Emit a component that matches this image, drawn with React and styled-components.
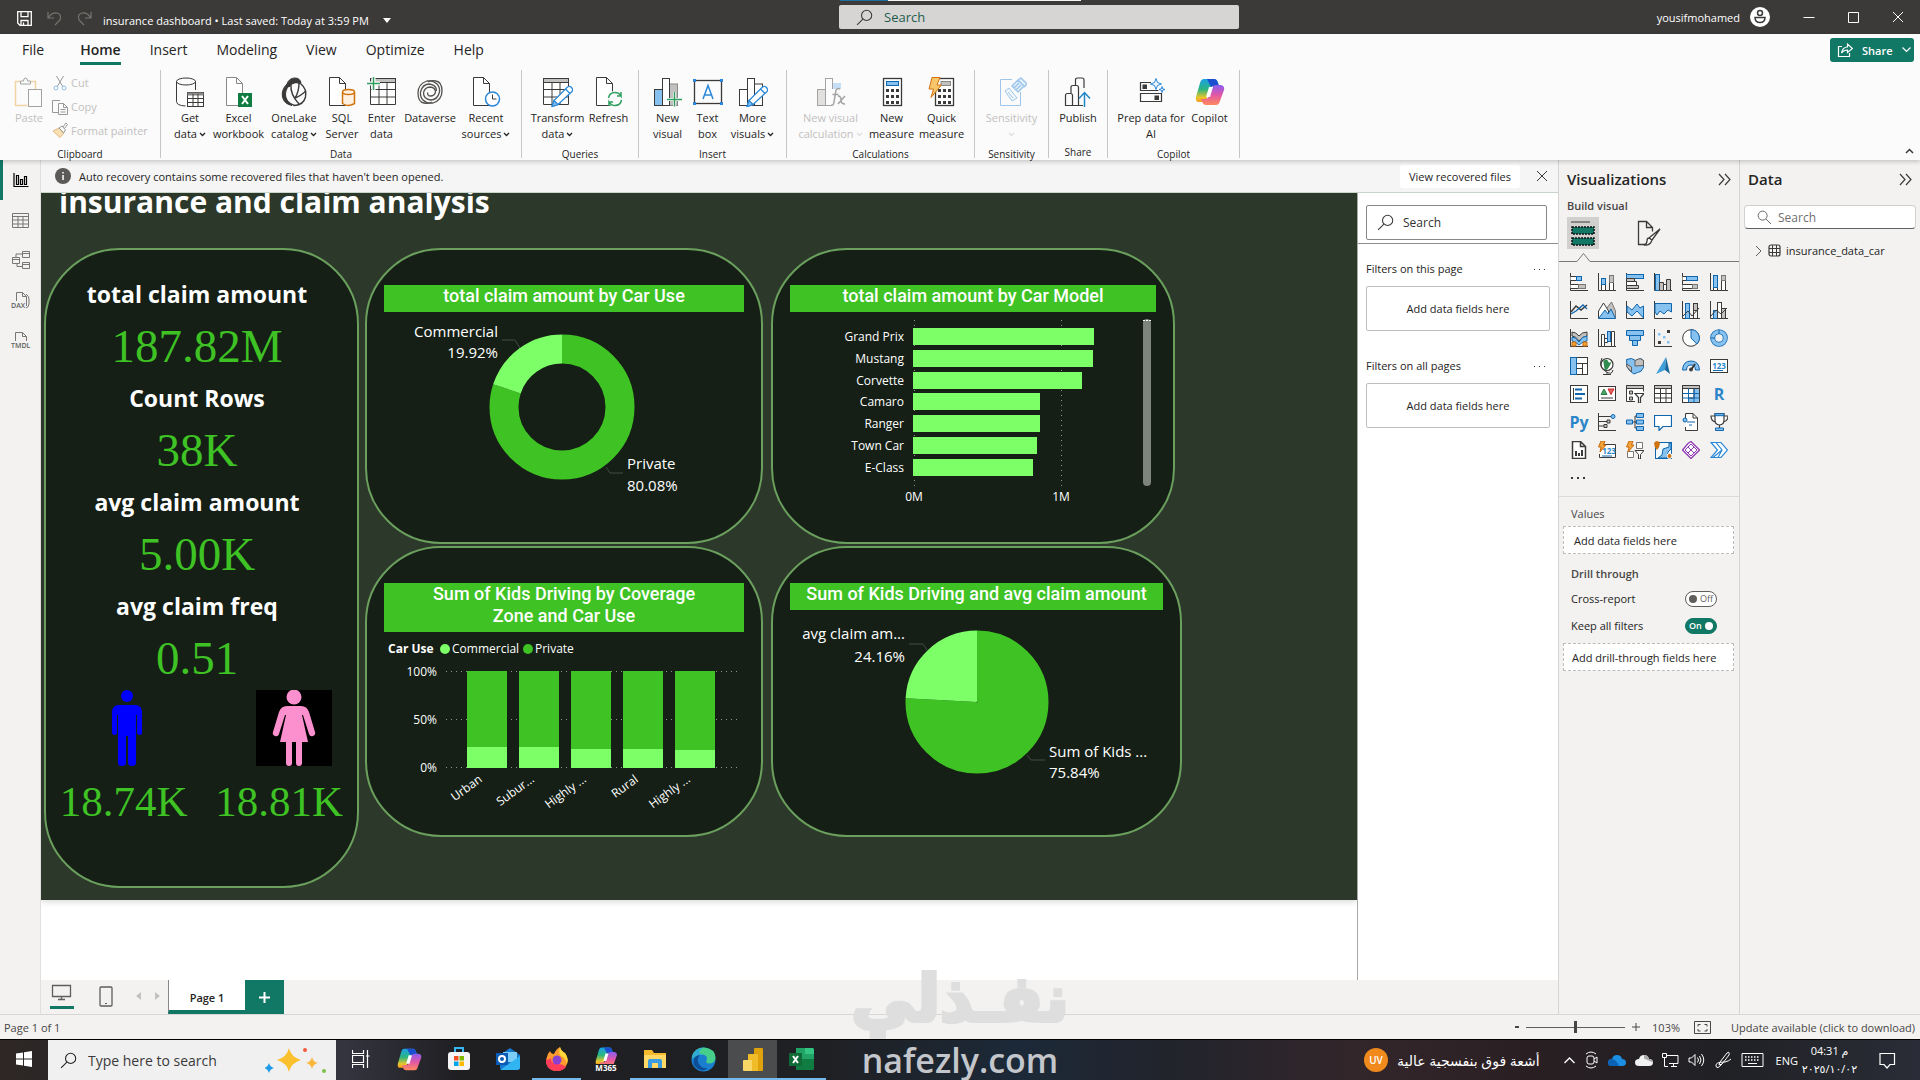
import React from 'react';
import styled, { createGlobalStyle } from 'styled-components';

// Colours shared by the icons
const K = '#3b3a39';
const B = '#86c1f0';
const S = '#1066ad';
const G = '#c3c1bf';
const GREEN = '#3ec224';
const LIGHT = '#7dff68';
const TEAL = '#117865';

const GlobalStyle = createGlobalStyle`
  * { box-sizing: border-box; }
  body {
    margin: 0;
    font-family: "Open Sans", "Noto Sans", "DejaVu Sans", sans-serif;
    font-size: 12px;
    color: #252423;
    overflow: hidden;
  }
  button, input {
    font: inherit;
    color: inherit;
  }
  button {
    background: none;
    border: 0;
    padding: 0;
    margin: 0;
  }
  svg { display: block; flex: none; }
`;

const Shell = styled.div`
  height: 100vh;
  display: flex;
  flex-direction: column;
  background: #f3f2f1;
`;

/* ---------- title bar ---------- */

const TitleBar = styled.header`
  height: 34px;
  flex: none;
  display: grid;
  grid-template-columns: 839fr 400fr 681fr;
  align-items: center;
  background: #3b3a39;
  color: #fff;
`;

const TitleLeft = styled.div`
  display: flex;
  align-items: center;
  gap: 15px;
  padding: 2px 0 0 17px;
`;

const FileName = styled.button`
  display: flex;
  align-items: center;
  gap: 14px;
  padding: 4px 0 0;
  margin-left: -4px;
  font-size: 11px;
  white-space: nowrap;
`;

const TitleSearch = styled.label`
  height: 24px;
  display: flex;
  align-items: center;
  gap: 11px;
  padding-left: 17px;
  border-radius: 2px;
  background: #d6d5d4;
  color: #1f5c4d;
`;

const SearchInput = styled.input.attrs({ type: 'text' })`
  flex: 1;
  min-width: 0;
  border: 0;
  outline: 0;
  padding: 0;
  background: none;
  font-size: ${(p) => p.$size || 12}px;
  &::placeholder {
    color: ${(p) => p.$tone};
    opacity: 1;
  }
`;

const TopStrip = styled.div`
  position: absolute;
  top: 0;
  left: 840px;
  width: 241px;
  height: 1px;
  background: linear-gradient(90deg, #1d6f9f 48px, #f3f3f3 48px);
`;

const TitleRight = styled.div`
  display: flex;
  justify-content: flex-end;
  align-items: center;
  padding-right: 16px;
  gap: 33px;
`;

const Account = styled.button`
  display: flex;
  align-items: center;
  gap: 10px;
  font-size: 11px;
  color: #fff;
`;

/* ---------- ribbon ---------- */

const Ribbon = styled.section`
  flex: none;
  height: 126px;
  background: #fbfbfb;
  box-shadow: 0 2px 4px rgba(0, 0, 0, 0.18);
  position: relative;
  z-index: 1;
`;

const TabRow = styled.nav`
  height: 36px;
  display: flex;
  align-items: flex-start;
  gap: 29px;
  padding: 0 6px 0 22px;
`;

const RibbonTab = styled.button`
  padding: 6px 0 2px;
  line-height: 20px;
  font-size: 14px;
  font-weight: ${(p) => (p.$active ? 600 : 400)};
  border-bottom: 3px solid ${(p) => (p.$active ? TEAL : 'transparent')};
  &:first-child { margin-right: 7px; }
`;

const ShareButton = styled.button`
  display: flex;
  align-items: center;
  gap: 9px;
  height: 24px;
  width: 84px;
  padding-left: 7px;
  margin: 4px 0 0 auto;
  border-radius: 3px;
  background: ${TEAL};
  color: #fff;
  font-size: 11px;
  font-weight: 600;
`;

const CollapseRibbon = styled.button`
  position: absolute;
  right: 6px;
  bottom: 6px;
`;

const Groups = styled.div`
  display: flex;
`;

const Group = styled.div`
  width: ${(p) => p.$width}px;
  height: 88px;
  display: flex;
  flex-direction: column;
  border-right: 1px solid #c8c6c4;
`;

const GroupBody = styled.div`
  display: flex;
  justify-content: ${(p) => (p.$start ? 'flex-start' : 'center')};
  height: 72px;
  padding-top: 7px;
  padding-left: ${(p) => (p.$start ? 6 : 0)}px;
`;

const GroupLabel = styled.div`
  margin-top: 6px;
  line-height: 12px;
  font-size: 10px;
  text-align: center;
`;

const BigButton = styled.button`
  width: ${(p) => p.$width}px;
  display: flex;
  flex-direction: column;
  align-items: center;
  gap: 3px;
  line-height: 16px;
  font-size: 11px;
  white-space: nowrap;
  color: ${(p) => (p.disabled ? '#c2c0be' : '#252423')};
  svg { opacity: ${(p) => (p.disabled ? 0.45 : 1)}; }
`;

const ButtonText = styled.span`
  display: flex;
  flex-direction: column;
  align-items: center;
`;

const TextLine = styled.span`
  display: flex;
  align-items: center;
  gap: 2px;
  min-height: 16px;
`;

const SmallButtons = styled.div`
  display: flex;
  flex-direction: column;
`;

const SmallButton = styled.button`
  display: flex;
  align-items: center;
  gap: 3px;
  height: 24px;
  margin-top: ${(p) => (p.$first ? -6 : 0)}px;
  color: #c2c0be;
  font-size: 11px;
  white-space: nowrap;
  svg { opacity: 0.5; }
`;

/* ---------- workspace ---------- */

const Workspace = styled.div`
  flex: 1;
  min-height: 0;
  display: flex;
  border-bottom: 1px solid #d9d7d5;
`;

const Rail = styled.nav`
  width: 41px;
  flex: none;
  display: flex;
  flex-direction: column;
  border-right: 1px solid #e1dfdd;
`;

const RailButton = styled.button`
  height: 40px;
  display: flex;
  align-items: center;
  justify-content: center;
  padding-right: 2px;
  border-left: 3px solid ${(p) => (p.$active ? TEAL : 'transparent')};
`;

const Center = styled.main`
  flex: 1;
  min-width: 0;
  display: flex;
  flex-direction: column;
`;

const Notice = styled.div`
  height: 33px;
  flex: none;
  display: flex;
  align-items: center;
  padding: 0 10px 0 14px;
  gap: 8px;
  background: #f5f5f5;
  border-bottom: 1px solid #c9d5cb;
  font-size: 11px;
`;

const NoticeAction = styled.button`
  margin-left: auto;
  margin-right: 8px;
  width: 120px;
  height: 23px;
  border-radius: 3px;
  background: #fff;
`;

const Middle = styled.div`
  flex: 1;
  min-height: 0;
  display: flex;
  background: #fff;
`;

const Canvas = styled.div`
  flex: 1;
  min-width: 0;
  overflow: hidden;
  background: #fff;
`;

const Report = styled.div`
  display: flow-root;
  padding: 0 0 12px 3px;
  background: #2c3829;
  color: #fff;
  box-shadow: 0 2px 6px rgba(0, 0, 0, 0.15);
`;

const ReportTitle = styled.h1`
  margin: -11px 0 26px 15px;
  line-height: 40px;
  font-size: 30px;
  font-weight: 700;
  white-space: nowrap;
`;

const ReportGrid = styled.div`
  display: grid;
  grid-template-columns: 321fr 406fr 411fr 175fr;
  align-items: start;
`;

const Column = styled.div`
  display: flex;
  flex-direction: column;
  gap: 2px;
  margin-right: ${(p) => p.$right || 0}px;
`;

const Card = styled.section`
  height: ${(p) => p.$height}px;
  margin-right: ${(p) => p.$right || 0}px;
  padding: 35px 17px 0;
  border: 2px solid #6a9f5d;
  border-radius: 76px;
  background: #151f16;
  overflow: hidden;
`;

const CardTitle = styled.h2`
  margin: 0;
  padding: 0 ${(p) => (p.$tight ? 0 : 30)}px 5px;
  background: ${GREEN};
  font-family: Roboto, "Liberation Sans", sans-serif;
  font-size: 18px;
  font-weight: 500;
  line-height: 22px;
  text-align: center;
`;

const KpiCard = styled.section`
  margin-right: 6px;
  padding: 24px 0 52px;
  border: 2px solid #6a9f5d;
  border-radius: 76px;
  background: #151f16;
  text-align: center;
`;

const KpiList = styled.div`
  padding-right: 9px;
`;

const KpiLabel = styled.div`
  line-height: 40px;
  font-size: 23px;
  font-weight: 700;
`;

const KpiValue = styled.div`
  line-height: 64px;
  font-family: "Liberation Serif", serif;
  font-size: ${(p) => p.$size || 47}px;
  color: ${GREEN};
`;

const Halves = styled.div`
  display: grid;
  grid-template-columns: 1fr 1fr;
  row-gap: 4px;
  justify-items: center;
`;

const Figure = styled.div`
  width: 76px;
  height: 76px;
  display: flex;
  justify-content: center;
  background: ${(p) => (p.$dark ? '#000' : 'none')};
  margin-left: ${(p) => (p.$dark ? 30 : 6)}px;
`;

const ChartText = styled.text`
  fill: #fff;
  font-size: ${(p) => p.$size || 15}px;
  font-weight: ${(p) => (p.$bold ? 700 : 400)};
`;

/* ---------- filter, visual and data panes ---------- */

const Filters = styled.aside`
  width: 201px;
  flex: none;
  border-left: 1px solid #a9a7a5;
  background: #fff;
`;

const FilterSearch = styled.div`
  padding: 12px 11px 3px 8px;
  border-bottom: 1px solid #8f8d8b;
`;

const FilterBox = styled.label`
  height: 35px;
  display: flex;
  align-items: center;
  gap: 9px;
  padding-left: 10px;
  border: 1px solid #8a8886;
  border-radius: 2px;
`;

const FilterHead = styled.div`
  display: flex;
  justify-content: space-between;
  padding: 17px 11px 0 8px;
  line-height: 16px;
  font-size: 11px;
  margin-bottom: 9px;
`;

const FilterDrop = styled.button`
  display: block;
  width: 184px;
  height: 45px;
  margin: 0 8px 10px;
  border: 1px solid #c0bebc;
  border-radius: 2px;
  font-size: 11px;
`;

const Pane = styled.aside`
  width: 181px;
  flex: none;
  border-left: 1px solid #d6d4d2;
  background: #f3f2f1;
`;

const PaneHead = styled.div`
  display: flex;
  align-items: center;
  justify-content: space-between;
  height: 38px;
  padding: 0 8px;
`;

const PaneTitle = styled.h2`
  margin: 0;
  font-size: 15px;
  font-weight: 600;
`;

const SubTitle = styled.div`
  padding-left: 8px;
  line-height: 16px;
  font-size: 11px;
  font-weight: 600;
  color: #484644;
`;

const ModeRow = styled.div`
  display: flex;
  gap: 34px;
  padding: 3px 8px 0;
`;

const ModeButton = styled.button`
  width: 32px;
  height: 32px;
  display: flex;
  align-items: center;
  justify-content: center;
  background: ${(p) => (p.$active ? '#d2d0ce' : 'none')};
`;

const VisualGrid = styled.div`
  display: grid;
  grid-template-columns: repeat(6, 28px);
  grid-auto-rows: 28px;
  padding: 5px 0 0 6px;
`;

const VisualButton = styled.button`
  display: flex;
  align-items: center;
  justify-content: center;
  font-size: 16px;
  font-weight: 700;
  color: #2a86c8;
`;

const MoreVisuals = styled.button`
  display: block;
  margin: 11px 0 17px 11px;
`;

const Fields = styled.div`
  border-top: 1px solid #dddbd9;
  padding: 9px 5px 0 4px;
  font-size: 11px;
`;

const FieldLabel = styled.div`
  line-height: 16px;
  padding-left: 8px;
  color: #484644;
  font-weight: ${(p) => (p.$strong ? 600 : 400)};
  margin-bottom: ${(p) => (p.$strong ? 3 : 0)}px;
`;

const FieldWell = styled.button`
  display: block;
  width: 100%;
  height: 28px;
  margin: 4px 0 12px;
  padding-left: ${(p) => (p.$snug ? 8 : 10)}px;
  border: 1px dashed #bdbbb9;
  background: #fff;
  text-align: left;
  white-space: nowrap;
`;

const ToggleRow = styled.label`
  display: flex;
  align-items: center;
  justify-content: space-between;
  height: 27px;
  padding: 0 17px 0 8px;
`;

const Toggle = styled.input.attrs({ type: 'checkbox' })`
  appearance: none;
  width: 32px;
  height: 16px;
  margin: 0;
  padding: 0 3px;
  display: inline-flex;
  flex-direction: row-reverse;
  align-items: center;
  justify-content: space-between;
  border: 1px solid #605e5c;
  border-radius: 8px;
  background: #fff;
  font-size: 9px;
  line-height: 14px;
  color: #605e5c;
  &::before { content: "Off"; }
  &::after {
    content: "";
    width: 8px;
    height: 8px;
    border-radius: 50%;
    background: #605e5c;
  }
  &:checked {
    flex-direction: row;
    background: ${TEAL};
    border-color: ${TEAL};
    color: #fff;
    font-weight: 600;
  }
  &:checked::before { content: "On"; }
  &:checked::after { background: #fff; }
`;

const DataSearch = styled.label`
  height: 24px;
  display: flex;
  align-items: center;
  gap: 6px;
  margin: 7px 4px 0;
  padding-left: 12px;
  border: 1px solid #d1d1d1;
  border-bottom-color: #616161;
  border-radius: 4px;
  background: #fff;
`;

const DataItem = styled.button`
  display: flex;
  align-items: center;
  gap: 5px;
  margin: 14px 0 0 15px;
  font-size: 11px;
`;

/* ---------- page tabs and status bar ---------- */

const PageTabs = styled.div`
  height: 34px;
  flex: none;
  display: flex;
  background: #f3f2f1;
`;

const ViewButton = styled.button`
  width: ${(p) => p.$width}px;
  display: flex;
  justify-content: center;
  align-items: center;
  padding-bottom: 2px;
`;

const PageTab = styled.button`
  width: 77px;
  border-left: 1px solid #8a8886;
  border-bottom: 4px solid ${TEAL};
  background: #fff;
  font-size: 11px;
  font-weight: 600;
  padding-top: 4px;
`;

const AddPage = styled.button`
  width: 39px;
  display: flex;
  align-items: center;
  justify-content: center;
  background: ${TEAL};
`;

const StatusBar = styled.footer`
  height: 24px;
  flex: none;
  display: flex;
  align-items: center;
  padding: 0 5px 0 4px;
  font-size: 11px;
  color: #484644;
`;

const Zoom = styled.div`
  margin-left: auto;
  display: flex;
  align-items: center;
  gap: 7px;
`;

const ZoomSlider = styled.input.attrs({ type: 'range' })`
  appearance: none;
  width: 99px;
  height: 12px;
  margin: 0;
  background: linear-gradient(#605e5c, #605e5c) center / 100% 1px no-repeat;
  &::-webkit-slider-thumb {
    appearance: none;
    width: 3px;
    height: 12px;
    background: #484644;
  }
`;

const ZoomValue = styled.span`
  margin: 0 7px 0 5px;
`;

const UpdateLink = styled.a`
  margin-left: 20px;
  color: inherit;
  text-decoration: none;
  white-space: nowrap;
`;

/* ---------- taskbar ---------- */

const Taskbar = styled.footer`
  height: 41px;
  flex: none;
  display: flex;
  border-top: 1px solid #000;
  background: linear-gradient(90deg, #2e2726 0, #2a2625 3%, #33343e 18%, #1f1f22 24%, #1f2023 43%,
    #1c2938 53%, #22242c 61%, #33262a 71%, #291f23 80%, #202125 90%, #2a2d37 100%);
  color: #fff;
`;

const TaskCell = styled.button`
  width: ${(p) => p.$width || 49}px;
  display: flex;
  align-items: center;
  justify-content: center;
  background: ${(p) => (p.$active ? '#4b4c4d' : 'none')};
  border-bottom: 2px solid ${(p) => (p.$open ? '#76b9ed' : 'transparent')};
`;

const TaskSearch = styled.label`
  width: 288px;
  display: flex;
  align-items: center;
  gap: 11px;
  padding: 0 9px 0 12px;
  background: #f0f0f0;
`;

const Tray = styled.div`
  margin-left: auto;
  display: flex;
  align-items: center;
  padding-right: 24px;
`;

const Weather = styled.button`
  display: flex;
  align-items: center;
  gap: 9px;
  margin-right: 23px;
  color: #fff;
  font-size: 14px;
  white-space: nowrap;
`;

const TrayIcons = styled.div`
  display: flex;
  align-items: center;
  gap: 9px;
  margin-right: 12px;
`;

const Clock = styled.div`
  width: 63px;
  margin-right: 18px;
  line-height: 18px;
  font-size: 11px;
  text-align: center;
  white-space: nowrap;
`;

const Language = styled.span`
  font-size: 11px;
`;

const Watermark = styled.div`
  position: absolute;
  bottom: 0;
  left: 50%;
  transform: translateX(-50%);
  display: flex;
  flex-direction: column;
  align-items: center;
  gap: 8px;
  font-weight: 700;
  pointer-events: none;
  z-index: 2;
`;

const WatermarkArabic = styled.span`
  font-family: "DejaVu Sans", sans-serif;
  font-size: 64px;
  line-height: 66px;
  color: #dddedd;
  -webkit-text-stroke: 4px #dddedd;
`;

const WatermarkLatin = styled.span`
  font-size: 34px;
  line-height: 40px;
  font-weight: 600;
  color: #c3c6ca;
`;

/* ---------- icons ---------- */

const Svg = ({ w = 18, h = w, vw = w, vh = w === h ? vw : h, children, stroke = K }) => (
  <svg width={w} height={h} viewBox={`0 0 ${vw} ${vh}`} fill="none" stroke={stroke} aria-hidden="true">
    {children}
  </svg>
);

const Chevron = () => (
  <Svg w={7} h={5} stroke="currentColor"><path d="M1 1l2.5 2.5L6 1" strokeWidth="1.3" /></Svg>
);

const Magnifier = ({ w = 17, stroke = K, flip }) => (
  <Svg w={w} vw={16} stroke={stroke}>
    <g transform={flip ? 'translate(16 0) scale(-1 1)' : undefined}>
      <circle cx="10" cy="6" r="4.8" /><path d="M6.5 9.5L1 15" />
    </g>
  </Svg>
);

const Cross = ({ w = 12, stroke = K }) => <Svg w={w} stroke={stroke}><path d="M1 1l10 10M11 1L1 11" /></Svg>;

const DoubleChevron = () => <Svg w={13}><path d="M1 1l5 5.5L1 12M7 1l5 5.5L7 12" strokeWidth="1.2" /></Svg>;

const Dots = ({ gap = 4, size = 1 }) => (
  <Svg w={gap * 2 + 4} h={4} stroke="none">
    {[0, 1, 2].map((i) => <rect key={i} x={1 + i * gap} y="2" width={size} height={size} fill={K} />)}
  </Svg>
);

const page = <path d="M2.5.5h10l6 6V28.5h-16zM12.5.5v6h6" fill="#fff" />;
const gridLines = 'M.5 5.5h25v22H.5zM.5 12.5h25M.5 20h25M9 5.5v22M17 5.5v22';
const bars = (first) => (
  <>
    <rect x="1.5" y="12.5" width="8" height="16" fill={first} />
    <rect x="15.5" y="7" width="9" height="21.5" fill={first === '#fff' ? '#fff' : G} stroke={first === '#fff' ? K : '#8a8886'} />
    <rect x="9.5" y="1.5" width="7" height="27" fill="#fff" />
  </>
);
const pencil = (
  <g stroke="#2b88d8" strokeWidth="1.3">
    <path d="M9 29.5l2-6L24.5 10q2-1.5 4 .5t.5 4L15 27.5z" fill="#fff" />
    <path d="M9 29.5l2-6 4 4z" fill={B} /><path d="M22.5 12l4.5 4.5" />
  </g>
);
const calculator = (
  <>
    <rect x="6.5" y="1.5" width="18" height="27" fill="#fff" strokeWidth="1.3" />
    {[12, 18, 24].map((y) => [9, 14, 19].map((x) => (
      <rect key={`${x}-${y}`} x={x} y={y} width="3" height="3" fill={K} stroke="none" />
    )))}
  </>
);
const bolt = <path d="M5 .5h8L10 8h4.5L4 20.5 6.5 12H2z" fill="#f7c66b" stroke="#d0730f" />;

const icons = {
  paste: (
    <>
      <path d="M6 4.5H1.5v24h12M17 4.5h4.5V12" stroke="#e8a33d" strokeWidth="1.5" />
      <path d="M6.5 7V4h3q0-3 2-3t2 3h3v3z" /><rect x="14.5" y="12.5" width="13" height="17" fill="#fff" />
    </>
  ),
  database: (
    <>
      <ellipse cx="11" cy="4.5" rx="9.5" ry="3.5" />
      <path d="M1.5 4.5v20q0 4 9 4.5M20.5 4.5V13" />
      <rect x="12.5" y="15.5" width="16" height="14" fill="#fff" /><path d="M12.5 17h16" strokeWidth="3" stroke="#8a8886" />
      <path d="M12.5 21.5h16M12.5 25.5h16M18 17v12.5M23 17v12.5" />
    </>
  ),
  excel: (
    <>
      <g stroke="#8a8886">{page}</g>
      <rect x="14" y="16" width="14" height="14" fill="#107c41" stroke="none" />
      <path d="M18 19l6 8M24 19l-6 8" stroke="#fff" strokeWidth="2" />
    </>
  ),
  onelake: (
    <>
      <path d="M8 7q2-6 8-6 5 0 6 5-8-2-12 4z" fill={K} />
      <path d="M8 7q-6 6-4.5 13T13 28.5Q6 24 6.5 17T12 8z" fill={K} />
      <path d="M9 8q7-5 13-1 6 5 4.5 13-2 8-11 8.5Q7 26 6 18" strokeWidth="1.4" />
      <path d="M12 8q-1 9 8 19M16 21q4-1 11-7M20 6q0 9-4 15" strokeWidth="1.4" />
    </>
  ),
  sql: (
    <>
      {page}
      <path d="M15.5 15v11.5q5.5 4 12 0V15" fill="#fdf1e1" stroke="#d0730f" strokeWidth="1.5" />
      <ellipse cx="21.5" cy="15" rx="6" ry="2.5" fill="#fdf1e1" stroke="#d0730f" strokeWidth="1.5" />
    </>
  ),
  enter: (
    <>
      <g transform="translate(3 0)"><path d={gridLines} fill="#fff" /><rect x=".5" y="1.5" width="25" height="4" fill={G} /></g>
      <path d="M6.5 0v13M0 6.5h13" stroke="#fbfbfb" strokeWidth="4" />
      <path d="M6.5 0v13M0 6.5h13" stroke="#2f9e5f" strokeWidth="1.5" />
    </>
  ),
  dataverse: (
    <g strokeWidth="1.3" stroke="#55534f">
      <path d="M22 7q-4-4-10-3Q3 7 3 16t6 10q5 1 8-1" />
      <path d="M8 23q4 4 10 3 9-3 9-12T21 4q-5-1-8 1" />
      <path d="M22 7q3 3 2.5 8-2 8-9 8-7-1-7-7 1-6 7-6 5 1 5 5-1 4-5 4-3 0-3-3.5" />
      <path d="M8 23q-3-3-2.5-8 2-8 9-8 7 1 7 7" />
    </g>
  ),
  recent: (
    <>
      {page}
      <circle cx="21.5" cy="22" r="7" fill="#fff" stroke="#2b88d8" strokeWidth="1.5" /><path d="M21.5 17.5V22h4" />
    </>
  ),
  transform: (
    <>
      <path d={gridLines} fill="#fff" /><rect x=".5" y="1.5" width="25" height="4" fill={G} />{pencil}
    </>
  ),
  refresh: (
    <>
      {page}
      <circle cx="21" cy="22" r="8" fill="#fbfbfb" stroke="none" />
      <path d="M14.5 21q1-5.5 6.5-5.5 4 0 6 3.5v-4M27.5 23q-1 5.5-6.5 5.5-4 0-6-3.5v4M27 19h-4M15 25h4" stroke="#2f9e5f" strokeWidth="1.5" />
    </>
  ),
  newVisual: (
    <>
      {bars(B)}<path d="M21.5 15v14.5M14 22.5h15" stroke="#fbfbfb" strokeWidth="3" />
      <path d="M21.5 15v14.5M14 22.5h15" stroke="#2f9e5f" strokeWidth="1.5" />
    </>
  ),
  textBox: (
    <>
      <rect x="1.5" y="3.5" width="27" height="23" strokeWidth="1.3" />
      <path d="M10 22l5-13.5L20 22M11.5 18h7" stroke="#2b88d8" strokeWidth="1.5" />
      {[[0, 2], [27, 2], [0, 25], [27, 25]].map(([x, y]) => (
        <rect key={`${x}${y}`} x={x} y={y} width="3" height="3" fill="#2b88d8" stroke="none" />
      ))}
    </>
  ),
  moreVisuals: <>{bars('#fff')}{pencil}</>,
  visualCalc: (
    <>
      {bars(G)}<rect x="17" y="6" width="8" height="6" fill={B} stroke="none" /><rect x="16" y="12" width="14" height="18" fill="#fbfbfb" stroke="none" />
      <path d="M24 12q-4-2-4.5 4l-1.5 9q-.5 4-3 3M16.5 17.5h6M22 19q3 0 3 4t4 4M29 19l-7 8" strokeWidth="1.5" />
    </>
  ),
  measure: <>{calculator}<rect x="9.5" y="4.5" width="12" height="4" fill={B} stroke={S} /></>,
  quick: (
    <>
      <g transform="translate(2 0)">{calculator}<rect x="12" y="4.5" width="9.5" height="4" fill={G} stroke="#8a8886" /></g>{bolt}
    </>
  ),
  sensitivity: (
    <g stroke="#2b88d8">
      <path d="M15 2.5H3.5v26h20V15" />
      <path d="M8 14l4-3 8 10-5 3zM11 15l5 6" fill="#e8f3fb" />
      <path d="M15 9l6-6 6 6-6 6zM21 3l3-2 6 6-3 3M17 11l5-5M19 13l5-5" fill="#cfe6f7" strokeWidth="1.5" />
    </g>
  ),
  publish: (
    <>
      <path d="M2.5 28.5v-10q0-2 2-2h3q2 0 2 2v10zM8 16v-5.5q0-2 2-2h3.5q2 0 2 2V28.5h-6M12.5 8V3q0-2 2-2H19q2 0 2 2v8M15.5 28.5H20" strokeWidth="1.2" />
      <path d="M21.5 30V16M16 21.5l5.5-6 5.5 6" stroke="#1f86c7" strokeWidth="1.5" />
    </>
  ),
  prep: (
    <>
      <path d="M15 5.5H4.5v8h18M4.5 16.5h21v8h-21z" strokeWidth="1.2" />
      <rect x="7" y="8" width="3.5" height="3.5" fill={K} /><rect x="19" y="19" width="3.5" height="3.5" fill={K} />
      <path d="M20 1.5l1.5 4 4 1.5-4 1.5-1.5 4-1.5-4-4-1.5 4-1.5zM26 9.5l.7 2.3 2.3.7-2.3.7-.7 2.3-.7-2.3-2.3-.7 2.3-.7z" fill="#e8f3fb" stroke="#2b88d8" />
    </>
  ),
};

const copilotShape = (
  <>
    <defs>
      <linearGradient id="cpA" x1="0" y1="0" x2="0" y2="1"><stop offset="0" stopColor="#1aa0e8" /><stop offset=".45" stopColor="#2cb67d" /><stop offset=".8" stopColor="#e9c52b" /><stop offset="1" stopColor="#f79a1f" /></linearGradient>
      <linearGradient id="cpB" x1="0" y1="0" x2="0" y2="1"><stop offset="0" stopColor="#8a5cf0" /><stop offset=".5" stopColor="#e257a6" /><stop offset="1" stopColor="#ff8a5b" /></linearGradient>
    </defs>
    <path d="M9 2h10q3 0 4 4l1 3h-5q-3 0-4 3l-3 9q-1 4-4 4H4q-4 0-3-5L5 6q1-4 4-4z" fill="url(#cpA)" />
    <path d="M12 2h7q3 0 4 4l1 3h-5q-2 0-3 1z" fill="#1b4fd0" />
    <path d="M21 28H11q-3 0-4-4l-1-2h4q3 0 4-3l3-8q1-3 4-3h5q4 1 3 5l-4 11q-1 4-4 4z" fill="url(#cpB)" />
    <path d="M14 10h4l-3 10h-4z" fill="#fff" />
  </>
);

const Copilot = ({ w = 30 }) => <Svg w={w} vw={30} stroke="none">{copilotShape}</Svg>;

const axis = <path d="M.5 0v17.5H18" />;
const visuals = [
  ['Stacked bar chart', <>{axis}<path d="M.5 3.5h6v4h-6M.5 11.5h8v4h-8" fill="#fff" /><rect x="6.5" y="3.5" width="5" height="4" fill={B} stroke={S} /><rect x="8.5" y="11.5" width="7" height="4" fill={G} stroke="#797775" /></>],
  ['Stacked column chart', <>{axis}<path d="M3.5 11.5h4v6h-4zM11.5 9.5h4v8h-4z" fill="#fff" /><rect x="3.5" y="5.5" width="4" height="6" fill={B} stroke={S} /><rect x="11.5" y="2.5" width="4" height="7" fill={G} stroke="#797775" /></>],
  ['Clustered bar chart', <>{axis}<rect x=".5" y="1.5" width="17" height="4" fill={B} stroke={S} /><path d="M.5 5.5h8v3h-8zM.5 12.5h12v3h-12z" fill={G} /><path d="M.5 8.5h10v4H.5z" fill="#fff" /></>],
  ['Clustered column chart', <>{axis}<rect x="1.5" y="1.5" width="4" height="16" fill={B} stroke={S} /><path d="M5.5 9.5h4v8h-4zM12.5 6.5h4v11h-4z" fill={G} /><path d="M9.5 11.5h3v6h-3z" fill="#fff" /></>],
  ['100% stacked bar chart', <>{axis}<path d="M.5 3.5h5v4h-5M.5 11.5h10v4H.5" fill="#fff" /><rect x="4.5" y="3.5" width="11" height="4" fill={B} stroke={S} /><rect x="10.5" y="11.5" width="5" height="4" fill={G} stroke="#797775" /></>],
  ['100% stacked column chart', <>{axis}<path d="M3.5 13.5h4v4h-4zM11.5 7.5h4v10h-4z" fill="#fff" /><rect x="3.5" y="2.5" width="4" height="12" fill={B} stroke={S} /><rect x="11.5" y="2.5" width="4" height="5" fill={G} stroke="#797775" /></>],
  ['Line chart', <>{axis}<path d="M1 11l5-6 5 4 6-5" strokeWidth="1.5" /><path d="M1 13l5-3 7-6 4 4" stroke={S} strokeWidth="1.3" /></>],
  ['Area chart', <><path d="M1 17L13.5 1 17.5 10v7z" fill={G} stroke="#797775" /><path d="M.5 17V10l5-8 5 8v7z" fill="#fff" /><path d="M.5 17.5L7 9l3 4 3-5 4.5 9.5z" fill={B} stroke={S} /></>],
  ['Stacked area chart', <>{axis}<path d="M1 5l5 4 5-6 3 4 3.5-2v12L11 10l-5 5-5-4z" fill={B} stroke={S} /></>],
  ['100% stacked area chart', <>{axis}<path d="M1 2.5h16.5V11L14 9l-4 4-4-3-3 4-2-3z" fill={B} stroke={S} /></>],
  ['Line and stacked column chart', <>{axis}<rect x="3.5" y="2.5" width="4" height="15" fill={B} stroke={S} /><rect x="11.5" y="2.5" width="4" height="7" fill={G} /><path d="M11.5 9.5h4v8h-4zM1 15l5-5 4 5 7-8" /></>],
  ['Line and clustered column chart', <>{axis}<rect x="3.5" y="9.5" width="4" height="8" fill={B} stroke={S} /><rect x="7.5" y="1.5" width="4" height="16" fill="#fff" /><rect x="11.5" y="7.5" width="4" height="10" fill={G} /><path d="M1 15l5-6 5 4 6-6" /></>],
  ['Ribbon chart', <>{axis}<path d="M2 3q4 0 7 4 3-4 8-4v4q-4 0-8 5-3-5-7-5z" fill={G} /><path d="M2 8q4 0 7 5 3-6 8-6v5q-4 0-8 4-3-3-7-4z" fill={B} stroke={S} /><path d="M2 13h4v4H2zM13 13h4v4h-4z" fill="#f2a33a" stroke="#c96a0a" /></>],
  ['Waterfall chart', <>{axis}<path d="M3.5 5.5h3v12h-3zM6.5 9.5h3v4h-3zM13.5 2.5h3v15h-3z" fill="#fff" /><rect x="9.5" y="2.5" width="3" height="10" fill={B} stroke={S} /></>],
  ['Funnel', <><path d="M.5 1.5h17v5H.5z" fill={B} stroke={S} /><path d="M3.5 6.5h11v5h-11zM6.5 11.5h5v5h-5z" fill={B} stroke={S} /></>],
  ['Scatter chart', <>{axis}<g stroke="none"><rect x="13" y="1" width="3" height="3" fill={K} /><rect x="4" y="4" width="2.5" height="2.5" fill={B} /><rect x="9" y="7" width="2.5" height="2.5" fill={B} /><rect x="13" y="12" width="2.5" height="2.5" fill={B} /><rect x="4" y="12" width="3" height="3" fill={K} /></g></>],
  ['Pie chart', <><circle cx="9" cy="9" r="8.3" fill="#fff" /><path d="M9 .7V9l5.8 6A8.3 8.3 0 009 .7z" fill={B} stroke={S} /></>],
  ['Donut chart', <><circle cx="9" cy="9" r="6.3" stroke={S} strokeWidth="5" /><circle cx="9" cy="9" r="6.3" stroke={B} strokeWidth="3.5" /><path d="M9 1v4M1 9h4" stroke={S} /></>],
  ['Treemap', <><rect x=".5" y=".5" width="17" height="17" fill="#fff" /><path d="M.5.5h6v17h-6z" fill={B} stroke={S} /><path d="M6.5 6.5h11M12.5 6.5v11M6.5 11.5h6" /></>],
  ['Map', <><circle cx="9" cy="7.5" r="6" fill="#fff" strokeWidth="1.2" /><path d="M5 4q4-3 5 0t3 1-2 5-5-1-1-5z" fill="#2f8a4e" stroke="none" /><path d="M4 1q-4 8 3 13t8-1M9 15v2M5 17.5h8" /></>],
  ['Filled map', <><path d="M.5 2.5l5-1 4 2 5-2 3 2v7q-2 5-6 5L8 17l-4-3-3-4z" fill={B} stroke={S} /><path d="M9 3.5l5-2 3.5 2v5L9 9zM.5 7l5 3v5L1 10z" fill={G} stroke="#605e5c" /></>],
  ['Azure map', <><path d="M12 0L2 17l9-4z" fill="#3f9fd8" stroke="none" /><path d="M12 0l4 17-5-4z" fill="#17689f" stroke="none" /></>],
  ['Gauge', <><path d="M.5 13Q1 4 9 4t8.5 9h-4q0-5-4.5-5t-4.5 5z" fill={B} stroke={S} /><path d="M9 13l4-6" strokeWidth="2" /><circle cx="9" cy="12.5" r="1.5" fill={K} /></>],
  ['Card', <><rect x=".5" y="2.5" width="17" height="13" fill="#fff" /><path d="M3 13.5h10" stroke={S} /><text x="9" y="11.5" fontSize="8" textAnchor="middle" fill="#2a86c8" stroke="none">123</text></>],
  ['Multi-row card', <><rect x=".5" y=".5" width="17" height="17" fill="#fff" /><path d="M3.5 3v12" /><path d="M5 4.5h7M5 9h10M5 13.5h7" stroke={S} strokeWidth="2" /></>],
  ['KPI', <><rect x=".5" y="1.5" width="17" height="14" fill="#fff" /><path d="M3 9.5L6 4l3 5.5z" fill="#4aa564" stroke="#2f7d46" /><path d="M10 4h6l-3 5.5z" fill="#e26767" stroke="#c22" /><path d="M3 13h12" /></>],
  ['Slicer', <><path d="M9 16.5H.5V.5h17v6" fill="#fff" /><path d="M.5.5h17v3H.5z" fill={G} /><path d="M3.5 6h3v3h-3zM3.5 12h3v3h-3z" fill={G} /><path d="M9 8.5h9l-3.5 4V18h-2v-5.5z" fill="#fff" strokeWidth="1.2" /></>],
  ['Table', <><rect x=".5" y=".5" width="17" height="17" fill="#fff" /><path d="M.5.5h17v3H.5z" fill={G} /><path d="M.5 8.5h17M.5 13h17M6.5 3.5v14M12 3.5v14" /></>],
  ['Matrix', <><rect x=".5" y=".5" width="17" height="17" fill="#fff" /><path d="M.5.5h17v3H.5z" fill={G} /><path d="M12 3.5h5.5v14H6.5V13H12z" fill={B} /><path d="M.5 8.5h17M.5 13h17M6.5 3.5v14M12 3.5v14" stroke={S} /></>],
  ['R script visual', 'R'],
  ['Python visual', 'Py'],
  ['Key influencers', <>{axis}<path d="M1 3.5h12M1 8.5h8M1 13h5" /><circle cx="15" cy="3.5" r="2" fill={B} stroke={S} /><path d="M9 7h3v3H9zM6 11.5h3v3H6z" fill={G} /></>],
  ['Decomposition tree', <><path d="M6 9h5M9 3v12M9 3h3M9 15h3" /><path d="M.5 7h6v4h-6zM10.5.5h7v4h-7zM10.5 7h7v4h-7zM10.5 13.5h7v4h-7z" fill={B} stroke={S} /></>],
  ['Q&A', <path d="M.5 2.5h17v11H9l-4 4v-4H.5z" fill="#fff" stroke={S} strokeWidth="1.2" />],
  ['Narrative', <><path d="M3.5 8V.5H11l4.5 4.5v12.5h-12V14M11 .5V5h4.5" fill="#fff" /><circle cx="3" cy="7" r="2" fill={B} stroke={S} /><path d="M5 9h8M7 12h3" stroke={S} /></>],
  ['Goals', <><path d="M5 .5h9v7q0 4-4.5 4.5Q5 11.5 5 7.5zM5 3H1q0 5 4.5 6M14 3h4q0 5-4.5 6M9.5 12v3" fill="#fff" strokeWidth="1.2" /><path d="M5.5 15h8v2.5h-8zM5 .7h9v2H5z" fill={B} stroke={S} /></>],
  ['Paginated report', <><path d="M2.5.5h8l5 5v12h-13zM10.5.5v5h5" fill="#fff" strokeWidth="1.5" /><path d="M6 10v5M9 12v3M12 9v6" strokeWidth="2" /></>],
  ['Card (new)', <><path d="M6 3.5h11.5v13H1.5V13" fill="#fff" /><text x="11" y="12.5" fontSize="8" textAnchor="middle" fill="#2a86c8" stroke="none">123</text><path d="M3 0h4L5.5 4H8L2 11l1-5H.5z" fill="#f2a33a" stroke="#c96a0a" /><path d="M4 15h10" stroke={S} /></>],
  ['Slicer (new)', <><path d="M10.5 1.5h6v6h-6zM1.5 10.5h6v6h-6z" fill="#fff" stroke="#797775" /><path d="M3 0h4L5.5 4H8L2 11l1-5H.5z" fill="#f2a33a" stroke="#c96a0a" /><path d="M9 9.5h9l-3.5 4V18h-2v-4.5z" fill="#fff" /></>],
  ['ArcGIS map', <><rect x="1.5" y="1.5" width="16" height="16" fill="#f3f9fd" stroke={S} /><path d="M4 17l4-3 1-6 6-2V2h2v6l-3 3-1 6z" fill={B} stroke={S} /><path d="M0 2q3-4 6 0 0 4-3 7-3-3-3-7z" fill="#d0730f" stroke="none" /><circle cx="15.5" cy="15" r="2.5" fill="#d0730f" stroke="#fff" /></>],
  ['Power Apps', <g stroke="#8e3ab0" fill="#fff"><path d="M6 2.5L9 .5l8.5 8.5L9 17.5.5 9z" strokeWidth="1.3" /><path d="M9 3l3 3-3 3-3-3zM9 9l3 3-3 3-3-3zM12 6l3 3-3 3M6 6L3 9l3 3" /></g>],
  ['Power Automate', <g stroke="#2b88d8" fill="#fff" strokeWidth="1.2"><path d="M1 1.5h10l6.5 7.5-6.5 7.5H1L7.5 9z" /><path d="M6 1.5l6 7.5-9 7.5M12 9l-4 7.5" fill="none" /></g>],
];

/* ---------- charts ---------- */

const KPIS = [
  ['total claim amount', '187.82M'],
  ['Count Rows', '38K'],
  ['avg claim amount', '5.00K'],
  ['avg claim freq', '0.51'],
];

const CAR_MODELS = [
  ['Grand Prix', 181], ['Mustang', 180], ['Corvette', 169], ['Camaro', 127],
  ['Ranger', 127], ['Town Car', 124], ['E-Class', 120],
];

const ZONES = [['Urban', 21], ['Subur...', 21], ['Highly ...', 19], ['Rural', 19], ['Highly ...', 18]];

// One circle per share, drawn clockwise from twelve o'clock
const Ring = ({ cx, cy, r, width, main }) => (
  <g transform={`rotate(-90 ${cx} ${cy})`} fill="none" strokeWidth={width}>
    <circle cx={cx} cy={cy} r={r} stroke={GREEN} pathLength="100" strokeDasharray={`${main} 100`} />
    <circle cx={cx} cy={cy} r={r} stroke={LIGHT} pathLength="100" strokeDasharray={`${100 - main} 100`} strokeDashoffset={-main} />
  </g>
);

const DonutChart = () => (
  <svg width="360" height="200">
    <Ring cx={178} cy={95} r={58} width={29} main={80.08} />
    <g fill="none" stroke="#434d43"><path d="M118 28h13l5 8M222 155l4 6h13" /></g>
    <ChartText x="114" y="25" textAnchor="end">Commercial</ChartText>
    <ChartText x="114" y="46" textAnchor="end">19.92%</ChartText>
    <ChartText x="243" y="157">Private</ChartText>
    <ChartText x="243" y="179">80.08%</ChartText>
  </svg>
);

const ModelChart = () => (
  <svg width="366" height="200">
    <g stroke="#8d958d" strokeDasharray="1 4"><path d="M124.5 8v166M271.5 8v166" /></g>
    {CAR_MODELS.map(([name, width], i) => {
      const y = 16 + Math.round(i * 21.8);
      return (
        <g key={name}>
          <ChartText $size={12} x="114" y={y + 13} textAnchor="end">{name}</ChartText>
          <rect x="123" y={y} width={width} height="17" fill={LIGHT} />
        </g>
      );
    })}
    <ChartText $size={12} x="124" y="189" textAnchor="middle">0M</ChartText>
    <ChartText $size={12} x="271" y="189" textAnchor="middle">1M</ChartText>
    <rect x="353" y="7" width="8" height="167" rx="4" fill="#7c847c" />
    <path d="M353 8.5h9" stroke="#fff" strokeDasharray="2 1" />
  </svg>
);

const ZoneChart = () => (
  <svg width="360" height="190" viewBox="0 -1 360 190">
    <ChartText $size={12} $bold x="4" y="20">Car Use</ChartText>
    <circle cx="61" cy="16" r="5" fill={LIGHT} />
    <ChartText $size={12} x="68" y="20">Commercial</ChartText>
    <circle cx="144" cy="16" r="5" fill={GREEN} />
    <ChartText $size={12} x="151" y="20">Private</ChartText>
    {['100%', '50%', '0%'].map((label, i) => (
      <g key={label}>
        <ChartText $size={12} x="53" y={43 + i * 48} textAnchor="end">{label}</ChartText>
        <path d={`M62 ${38.5 + i * 48}h291`} stroke="#8d958d" strokeDasharray="1 4" />
      </g>
    ))}
    {ZONES.map(([name, share], i) => {
      const x = 83 + i * 52;
      return (
        <g key={x}>
          <rect x={x} y="38" width="40" height="97" fill={GREEN} />
          <rect x={x} y={135 - share} width="40" height={share} fill={LIGHT} />
          <ChartText $size={12} x={x + 16} y="148" textAnchor="end" transform={`rotate(-36 ${x + 16} 148)`}>{name}</ChartText>
        </g>
      );
    })}
  </svg>
);

const PieChart = () => (
  <svg width="373" height="190">
    <Ring cx={187} cy={92} r={36} width={71} main={75.84} />
    <g fill="none" stroke="#434d43"><path d="M119 34h14l4 6M237 145l4 5h14" /></g>
    <ChartText x="115" y="29" textAnchor="end">avg claim am...</ChartText>
    <ChartText x="115" y="52" textAnchor="end">24.16%</ChartText>
    <ChartText x="259" y="147">Sum of Kids ...</ChartText>
    <ChartText x="259" y="168">75.84%</ChartText>
  </svg>
);

/* ---------- page parts ---------- */

const Command = ({ width, icon, lines, arrow, disabled }) => (
  <BigButton $width={width} disabled={disabled}>
    {icon === 'copilot' ? <Copilot /> : <Svg w={30}>{icons[icon]}</Svg>}
    <ButtonText>
      {lines.map((line, i) => (
        <TextLine key={line}>{line}{arrow && i === lines.length - 1 && <Chevron />}</TextLine>
      ))}
    </ButtonText>
  </BigButton>
);

const GROUPS = [
  ['Data', 361, [
    [48, 'database', ['Get', 'data'], true], [49, 'excel', ['Excel', 'workbook']],
    [62, 'onelake', ['OneLake', 'catalog'], true], [34, 'sql', ['SQL', 'Server']],
    [45, 'enter', ['Enter', 'data']], [52, 'dataverse', ['Dataverse']], [60, 'recent', ['Recent', 'sources'], true],
  ]],
  ['Queries', 117, [[57, 'transform', ['Transform', 'data'], true], [45, 'refresh', ['Refresh']]]],
  ['Insert', 148, [[38, 'newVisual', ['New', 'visual']], [42, 'textBox', ['Text', 'box']], [48, 'moreVisuals', ['More', 'visuals'], true]]],
  ['Calculations', 188, [
    [75, 'visualCalc', ['New visual', 'calculation'], true, true], [47, 'measure', ['New', 'measure']], [53, 'quick', ['Quick', 'measure']],
  ]],
  ['Sensitivity', 74, [[58, 'sensitivity', ['Sensitivity', ''], true, true]]],
  ['Share', 59, [[45, 'publish', ['Publish']]]],
  ['Copilot', 132, [[72, 'prep', ['Prep data for', 'AI']], [45, 'copilot', ['Copilot']]]],
];

const RibbonBar = () => (
  <Ribbon>
    <TabRow>
      {['File', 'Home', 'Insert', 'Modeling', 'View', 'Optimize', 'Help'].map((tab) => (
        <RibbonTab key={tab} $active={tab === 'Home'}>{tab}</RibbonTab>
      ))}
      <ShareButton>
        <Svg w={16} stroke="#fff"><path d="M5 4.5H1.5v10h11V11M4.5 11q1-6 6-6V2l5 4.5-5 4V8q-4 0-6 3z" strokeWidth="1.2" /></Svg>
        Share
        <Svg w={9} h={6} stroke="#fff"><path d="M.5.5l4 4 4-4" strokeWidth="1.2" /></Svg>
      </ShareButton>
    </TabRow>
    <Groups>
      <Group $width={161}>
        <GroupBody $start>
          <Command width={46} icon="paste" lines={['Paste']} disabled />
          <SmallButtons>
            <SmallButton disabled $first>
              <Svg w={16}><path d="M4.5 1L11 12M11.5 1L5 12" /><circle cx="4" cy="13" r="2" stroke="#2b88d8" /><circle cx="12" cy="13" r="2" stroke="#2b88d8" /></Svg>Cut
            </SmallButton>
            <SmallButton disabled>
              <Svg w={16}><path d="M6 13.5H.5V1.5H8M6.5 4.5h5l4 4v7h-9zM11.5 4.5v4h4M8.5 10.5h5M8.5 13h5" /></Svg>Copy
            </SmallButton>
            <SmallButton disabled>
              <Svg w={16}><path d="M1 9l6-3 5 5-4 4.5z" fill="#f7c66b" stroke="#d0730f" /><path d="M7 6l3-2 3.5 4-2 3zM11 5l3-4 1.5 1.5-3 4" /></Svg>Format painter
            </SmallButton>
          </SmallButtons>
        </GroupBody>
        <GroupLabel>Clipboard</GroupLabel>
      </Group>
      {GROUPS.map(([label, width, items]) => (
        <Group key={label} $width={width}>
          <GroupBody>
            {items.map(([w, icon, lines, arrow, disabled]) => (
              <Command key={icon} width={w} icon={icon} lines={lines} arrow={arrow} disabled={disabled} />
            ))}
          </GroupBody>
          <GroupLabel>{label}</GroupLabel>
        </Group>
      ))}
    </Groups>
    <CollapseRibbon aria-label="Collapse the ribbon">
      <Svg w={9} h={6}><path d="M1 5l3.5-3.5L8 5" strokeWidth="1.5" /></Svg>
    </CollapseRibbon>
  </Ribbon>
);

const SideRail = () => (
  <Rail>
    <RailButton $active aria-label="Report view">
      <Svg w={16} stroke="#000"><path d="M1 1v13.5h14.5M3.5 3.5h2v9h-2zM7.5 7.5h2v5h-2zM11.5 4.5h2v8h-2z" strokeWidth="1.2" /></Svg>
    </RailButton>
    <RailButton aria-label="Table view">
      <Svg w={17} h={16} stroke="#797775"><path d="M.5 1.5h16v14H.5zM.5 4.5h16M.5 8h16M.5 12h16M6 4.5v11M11 4.5v11" /></Svg>
    </RailButton>
    <RailButton aria-label="Model view">
      <Svg w={18} stroke="#797775"><path d="M.5 6.5h7v6h-7zM.5 8.5h7M10.5.5h7v6h-7zM10.5 2.5h7M10.5 11.5h7v6h-7zM10.5 13.5h7M4 6V3h6M5 13v2.5h5" /></Svg>
    </RailButton>
    <RailButton aria-label="DAX query view">
      <Svg w={20} h={17} stroke="#797775"><path d="M5.5 9V.5h6l4 4V14M11.5.5v4h4M15 2q3 2 3 5v5q0 3-3 4" /><text x="0" y="16" fontSize="7" fontWeight="600" fill="#605e5c" stroke="none">DAX</text></Svg>
    </RailButton>
    <RailButton aria-label="TMDL view">
      <Svg w={20} h={17} stroke="#797775"><path d="M4.5 9V.5h7l4 4V9M11.5.5v4h4" /><text x="0" y="16" fontSize="7" fontWeight="600" fill="#605e5c" stroke="none">TMDL</text></Svg>
    </RailButton>
  </Rail>
);

const Dashboard = () => (
  <Report>
    <ReportTitle>insurance and claim analysis</ReportTitle>
    <ReportGrid>
      <KpiCard>
        <KpiList>
          {KPIS.map(([label, value]) => (
            <React.Fragment key={label}>
              <KpiLabel>{label}</KpiLabel>
              <KpiValue>{value}</KpiValue>
            </React.Fragment>
          ))}
        </KpiList>
        <Halves>
          <Figure>
            <Svg w={32} h={76} stroke="none">
              <g fill="#0000fe"><circle cx="16" cy="6" r="6" /><path d="M8 15h16q7 0 7 8v19q0 3-2.5 3T26 42V25h-1v48q0 3-4 3t-4-3V46h-2v27q0 3-4 3t-4-3V25H6v17q0 3-2.5 3T1 42V23q0-8 7-8z" /></g>
            </Svg>
          </Figure>
          <Figure $dark>
            <Svg w={44} h={76} stroke="none">
              <g fill="#fc8fce"><circle cx="22" cy="7" r="7.5" /><path d="M15 16h14q6 0 8 6l6 20q1 3-2 4t-4-2l-6-19h-1l6 27h-6v21q0 3-3 3t-3-3V52h-4v21q0 3-3 3t-3-3V52H8l6-27h-1L7 44q-1 3-4 2t-2-4l6-20q2-6 8-6z" /></g>
            </Svg>
          </Figure>
          <KpiValue $size={43}>18.74K</KpiValue>
          <KpiValue $size={43}>18.81K</KpiValue>
        </Halves>
      </KpiCard>
      <Column $right={8}>
        <Card $height={296}><CardTitle>total claim amount by Car Use</CardTitle><DonutChart /></Card>
        <Card $height={291}><CardTitle>Sum of Kids Driving by Coverage Zone and Car Use</CardTitle><ZoneChart /></Card>
      </Column>
      <Column>
        <Card $height={296} $right={7}><CardTitle>total claim amount by Car Model</CardTitle><ModelChart /></Card>
        <Card $height={291}><CardTitle $tight>Sum of Kids Driving and avg claim amount</CardTitle><PieChart /></Card>
      </Column>
    </ReportGrid>
  </Report>
);

const FiltersPane = () => (
  <Filters>
    <FilterSearch>
      <FilterBox><Magnifier w={17} /><SearchInput $tone="#323130" placeholder="Search" aria-label="Search filters" /></FilterBox>
    </FilterSearch>
    {['Filters on this page', 'Filters on all pages'].map((title) => (
      <React.Fragment key={title}>
        <FilterHead>{title}<button aria-label="More options"><Dots gap={5} /></button></FilterHead>
        <FilterDrop>Add data fields here</FilterDrop>
      </React.Fragment>
    ))}
  </Filters>
);

const VisualsPane = () => (
  <Pane>
    <PaneHead><PaneTitle>Visualizations</PaneTitle><button aria-label="Collapse visualizations"><DoubleChevron /></button></PaneHead>
    <SubTitle>Build visual</SubTitle>
    <ModeRow>
      <ModeButton $active aria-label="Build visual">
        <Svg w={24} h={26}><path d="M0 2h19" /><path d="M1 7h22v7H1zM1 18h22v7H1z" fill={TEAL} stroke="#111" strokeDasharray="2 1" strokeWidth="1.5" /></Svg>
      </ModeButton>
      <ModeButton aria-label="Format visual">
        <Svg w={24} h={26}><path d="M8 24.5H1.5v-23h8l6 6v4M9.5 1.5v6h6" strokeWidth="1.3" /><path d="M23 9l-8 11-3-2zM12 18q-2 0-2 3t-3 4q6 1 8-5z" fill="#fff" strokeWidth="1.3" /></Svg>
      </ModeButton>
    </ModeRow>
    <Svg w={180} h={14} stroke="#797775"><path d="M0 12.5h18l6.5-8 6.5 8h149" /></Svg>
    <VisualGrid>
      {visuals.map(([name, icon]) => (
        <VisualButton key={name} aria-label={name}>{typeof icon === 'string' ? icon : <Svg w={18}>{icon}</Svg>}</VisualButton>
      ))}
    </VisualGrid>
    <MoreVisuals aria-label="Get more visuals"><Dots gap={6} size={2} /></MoreVisuals>
    <Fields>
      <FieldLabel>Values</FieldLabel>
      <FieldWell>Add data fields here</FieldWell>
      <FieldLabel $strong>Drill through</FieldLabel>
      <ToggleRow>Cross-report<Toggle /></ToggleRow>
      <ToggleRow>Keep all filters<Toggle defaultChecked /></ToggleRow>
      <FieldWell $snug>Add drill-through fields here</FieldWell>
    </Fields>
  </Pane>
);

const DataPane = () => (
  <Pane>
    <PaneHead><PaneTitle>Data</PaneTitle><button aria-label="Collapse data"><DoubleChevron /></button></PaneHead>
    <DataSearch><Magnifier w={15} stroke="#616161" flip /><SearchInput $tone="#707070" placeholder="Search" aria-label="Search data" /></DataSearch>
    <DataItem>
      <Svg w={8} h={12}><path d="M1 1l5 5-5 5" stroke="#605e5c" /></Svg>
      <Svg w={13}><rect x="1" y="1" width="11" height="11" rx="2" strokeWidth="1.2" /><path d="M1 4.5h11M1 8.5h11M4.5 1v11M8.5 1v11" /></Svg>
      insurance_data_car
    </DataItem>
  </Pane>
);

const TASKS = [
  ['Copilot', <Copilot w={25} />],
  ['Store', (
    <Svg w={24} stroke="none"><path d="M8 6V1h8v5" stroke="#35b8f1" strokeWidth="2" /><rect x="1" y="5" width="22" height="18" rx="3" fill="#f5f5f5" /><path d="M7 9h4.5v4.5H7z" fill="#f25022" /><path d="M12.5 9H17v4.5h-4.5z" fill="#7fba00" /><path d="M7 14.5h4.5V19H7z" fill="#00a4ef" /><path d="M12.5 14.5H17V19h-4.5z" fill="#ffb900" /></Svg>
  )],
  ['Outlook', (
    <Svg w={26} h={24} stroke="none"><path d="M5 8L15 1l10 7v12q0 3-3 3H8q-3 0-3-3z" fill="#1379d1" /><path d="M8 5h14v10H8z" fill="#7ccdf7" /><path d="M5 23L25 9v11q0 3-3 3z" fill="#31b5f2" /><path d="M1 6h12v12H1z" fill="#0a5bb5" /><circle cx="7" cy="12" r="3" stroke="#fff" strokeWidth="2" /></Svg>
  )],
  ['Firefox', (
    <Svg w={26} h={24} stroke="none"><path d="M3 10q1-4 3-6 1 3 4 3 2-5 6-7 1 4 5 6 4 6 2 11-3 7-10 7T3 18q-2-4 0-8z" fill="#ff9a2e" /><path d="M2 12q1 2 5-1 0 6 7 6 5 0 8 3-3 4-9 4-9 0-11-8z" fill="#ff3d5a" /><path d="M16 0q1 4 5 6 4 6 2 11-1-6-6-8-3-4-1-9z" fill="#ffd83b" /><circle cx="13" cy="13" r="4.5" fill="#8a3fd1" /></Svg>
  ), true],
  ['M365', (
    <Svg w={28} h={26} stroke="none"><g transform="translate(3 0) scale(.75)">{copilotShape}</g><path d="M4 18h22v8H4z" fill="#1f2023" /><text x="14" y="25" fontSize="8" fontWeight="700" textAnchor="middle" fill="#fff">M365</text></Svg>
  )],
  ['File Explorer', (
    <Svg w={24} h={22} stroke="none"><path d="M1 2h8l2 3h12v15H1z" fill="#f5b92e" /><path d="M1 7h22v13H1z" fill="#ffd866" /><path d="M5 20v-7q0-2 2-2h10q2 0 2 2v7h-4v-5H9v5z" fill="#3b9be0" /></Svg>
  ), true],
  ['Edge', (
    <Svg w={25} stroke="none"><circle cx="12.5" cy="12.5" r="12" fill="#1b7fd0" /><path d="M1 10Q3 .5 13 .5q11 1 11.5 10 0 6-7 6-3-1-2-3 2-5-4-6-6 0-10 4z" fill="#45cf8a" /><path d="M1 10Q4 1 12 .7q-7 4-1 6.8-6 0-10 4z" fill="#2fa8d8" /><path d="M3 18Q1 9 9 8q-4 4-1 9t9 4q-7 6-14-3z" fill="#0c4f96" /></Svg>
  ), true],
  ['Power BI Desktop', (
    <Svg w={22} h={25} stroke="none"><rect x="12" y="1" width="9" height="23" rx="1" fill="#e0a20c" /><rect x="6" y="7" width="10" height="17" rx="1" fill="#f0bc2a" /><rect x="1" y="13" width="9" height="11" rx="1" fill="#f9d767" /></Svg>
  ), true, true],
  ['Excel', (
    <Svg w={25} h={24} stroke="none"><path d="M7 1h16q2 0 2 2v18q0 2-2 2H7z" fill="#21a366" /><path d="M7 12h18v9q0 2-2 2H7z" fill="#107c41" /><path d="M16 1h7q2 0 2 2v4h-9z" fill="#33c481" /><rect y="6" width="13" height="13" fill="#0f6a38" /><path d="M4 9l5 7M9 9l-5 7" stroke="#fff" strokeWidth="2" /></Svg>
  ), true],
];

const WindowsTaskbar = () => (
  <Taskbar>
    <TaskCell $width={48} aria-label="Start">
      <Svg w={16} stroke="none"><path d="M0 2.5l7-1v6H0zM8 1.3L16 0v7.5H8zM0 8.5h7v6l-7-1zM8 8.5h8V16l-8-1.3z" fill="#fff" /></Svg>
    </TaskCell>
    <TaskSearch>
      <Magnifier w={17} stroke="#222" />
      <SearchInput $tone="#3a3a3a" $size={14} placeholder="Type here to search" aria-label="Type here to search" />
      <Svg w={62} h={26} stroke="none">
        <path d="M24 1q2 9 12 12-10 3-12 12-2-9-12-12 10-3 12-12z" fill="#fbc02d" /><path d="M47 10q1 5 6 6-5 1-6 6-1-5-6-6 5-1 6-6z" fill="#fbb63a" />
        <path d="M4 16q1 4 5 5-4 1-5 5-1-4-5-5 4-1 5-5z" fill="#1e9be8" /><circle cx="40" cy="3" r="2" fill="#f25c3b" /><circle cx="59" cy="24" r="2" fill="#7cc24a" />
      </Svg>
    </TaskSearch>
    <TaskCell aria-label="Task view">
      <Svg w={18} stroke="#fff"><path d="M.5 0v3.5h11V0M.5 18v-3.5h11V18M.5 5.5h11v7H.5zM15.5 0v18M14 6h3.5" strokeWidth="1.2" /></Svg>
    </TaskCell>
    {TASKS.map(([name, icon, open, active]) => (
      <TaskCell key={name} aria-label={name} $open={open} $active={active}>{icon}</TaskCell>
    ))}
    <Tray>
      <Weather>
        <Svg w={24} stroke="none"><circle cx="12" cy="12" r="12" fill="#f08a1d" /><text x="12" y="16" fontSize="10" fontWeight="600" textAnchor="middle" fill="#fff">UV</text></Svg>
        <span dir="rtl">أشعة فوق بنفسجية عالية</span>
      </Weather>
      <TrayIcons>
        <Svg w={13} h={8} stroke="#fff"><path d="M1.5 7l5-5 5 5" strokeWidth="1.3" /></Svg>
        <Svg w={14} h={18} stroke="#fff"><rect x="2" y="5" width="7" height="8" rx="2" /><path d="M9 8l3-2v6l-3-2M1 3q5-4 10 0M1 15q5 4 10 0" /></Svg>
        <Svg w={18} h={13} stroke="none"><path d="M4 12q-4 0-4-3.5T4 5q1-4 5-4 4 0 5 4 4 0 4 3.5T14 12z" fill="#1a8fe3" /><path d="M0 9q0-4 4-4 4 0 7 7H4q-4 0-4-3z" fill="#0b63b8" /></Svg>
        <Svg w={18} h={13} stroke="none"><path d="M4 12q-4 0-4-3.5T4 5q1-4 5-4 4 0 5 4 4 0 4 3.5T14 12z" fill="#f1f1f1" /><path d="M9 1q4 0 5 4 4 0 4 3.5l-9-4z" fill="#a9a9ab" /></Svg>
        <Svg w={17} h={16} stroke="#fff"><path d="M5 3.5h11v8H7M9 14.5h6M11.5 12v2M.5 1.5h4v4h-4zM2.5 6v8.5H6" /></Svg>
        <Svg w={17} h={14} stroke="#fff"><path d="M1 5h2.5L7 1.5v11L3.5 9H1zM9.5 4.5q2 2.5 0 5M11.5 3q3 4 0 8M13.5 1q4.5 6 0 12" /></Svg>
        <Svg w={18} h={20} stroke="#fff"><path d="M6 12L13 3q3-2 2 2l-7 9-3 1zM8 14q-5 6-6 2t9-4q4-1 6-3" /></Svg>
        <Svg w={23} h={16} stroke="#fff"><path d="M1 1.5h21v13H1zM7 11.5h9" /><path d="M4 5h15M4 8h15" strokeDasharray="1.5 1.5" strokeWidth="1.5" /></Svg>
      </TrayIcons>
      <Language>ENG</Language>
      <Clock><div>04:31 م</div><div>٢٠٢٥/١٠/٠٢</div></Clock>
      <Svg w={17} h={17} stroke="#fff"><path d="M1 1.5h14.5v11H11l-3 3.5-3-3.5H1z" strokeWidth="1.2" /></Svg>
    </Tray>
  </Taskbar>
);

const App = () => (
  <Shell>
    <GlobalStyle />
    <TitleBar>
      <TitleLeft>
        <Svg w={15} stroke="#fff"><path d="M.7.7h13.6v13.6H3L.7 12zM4 .7v5h7v-5M4 14V9.5h7V14M6.5 11.5V14" strokeWidth="1.3" /></Svg>
        <Svg w={15} stroke="#77756f"><path d="M1 1v6h6M1.5 6.5Q5 1 10 2t3 7l-5 5" strokeWidth="1.2" /></Svg>
        <Svg w={15} stroke="#77756f"><path d="M14 1v6H8M13.5 6.5Q10 1 5 2T2 9l5 5" strokeWidth="1.2" /></Svg>
        <FileName>
          insurance dashboard • Last saved: Today at 3:59 PM
          <Svg w={8} h={5} stroke="none"><path d="M0 0h8L4 5z" fill="#fff" /></Svg>
        </FileName>
      </TitleLeft>
      <TitleSearch><Magnifier w={17} /><SearchInput $tone="#1f5c4d" $size={13} placeholder="Search" aria-label="Search" /></TitleSearch>
      <TitleRight>
        <Account>
          yousifmohamed
          <Svg w={20} stroke="none"><circle cx="10" cy="10" r="10" fill="#fff" /><g stroke="#3b3a39" strokeWidth="1.5"><circle cx="10" cy="6" r="2.5" /><path d="M5 10.5h10q0 5-5 5t-5-5z" /></g></Svg>
        </Account>
        <Svg w={12} stroke="#fff"><path d="M.5 6.5h11" /></Svg>
        <Svg w={11} stroke="#fff"><path d="M.5.5h10v10H.5z" /></Svg>
        <Cross stroke="#fff" />
      </TitleRight>
      <TopStrip />
    </TitleBar>
    <RibbonBar />
    <Workspace>
      <SideRail />
      <Center>
        <Notice>
          <Svg w={16} stroke="none"><circle cx="8" cy="8" r="8" fill="#5c5a58" /><path d="M7.3 4h1.5v1.5H7.3zM7.3 7h1.5v5H7.3z" fill="#fff" /></Svg>
          Auto recovery contains some recovered files that haven't been opened.
          <NoticeAction>View recovered files</NoticeAction>
          <button aria-label="Dismiss"><Cross /></button>
        </Notice>
        <Middle>
          <Canvas><Dashboard /></Canvas>
          <FiltersPane />
        </Middle>
        <PageTabs>
          <ViewButton $width={42} aria-label="Desktop layout">
            <Svg w={24} h={25} stroke="#605e5c"><path d="M2.5 1.5h18v11h-18zM11.5 12.5v3M8 15.5h7" strokeWidth="1.3" /><path d="M0 23.5h24" stroke={TEAL} strokeWidth="3" /></Svg>
          </ViewButton>
          <ViewButton $width={46} aria-label="Mobile layout">
            <Svg w={14} h={21} stroke="#605e5c"><rect x="1" y="1" width="12" height="19" rx="1" strokeWidth="1.3" /><path d="M6 17.5h2" /></Svg>
          </ViewButton>
          <ViewButton $width={18} aria-label="Previous page"><Svg w={5} h={8} stroke="none"><path d="M5 0v8L0 4z" fill={G} /></Svg></ViewButton>
          <ViewButton $width={21} aria-label="Next page"><Svg w={5} h={8} stroke="none"><path d="M0 0v8l5-4z" fill={G} /></Svg></ViewButton>
          <PageTab>Page 1</PageTab>
          <AddPage aria-label="New page"><Svg w={11} stroke="#fff"><path d="M5.5 0v11M0 5.5h11" strokeWidth="2" /></Svg></AddPage>
        </PageTabs>
      </Center>
      <VisualsPane />
      <DataPane />
    </Workspace>
    <StatusBar>
      Page 1 of 1
      <Zoom>
        <Svg w={4} h={3} stroke="none"><path d="M0 0h4v2H0z" fill="#484644" /></Svg>
        <ZoomSlider aria-label="Zoom" />
        <Svg w={8} stroke="#484644"><path d="M4 0v8M0 4h8" /></Svg>
        <ZoomValue>103%</ZoomValue>
        <Svg w={17} h={13} stroke="#484644"><path d="M.5.5h16v12H.5zM4 5.5v-2h2.5M10.5 3.5H13v2M4 8v2h2.5M10.5 10H13V8" /></Svg>
      </Zoom>
      <UpdateLink href="#update">Update available (click to download)</UpdateLink>
    </StatusBar>
    <WindowsTaskbar />
    <Watermark>
      <WatermarkArabic dir="rtl">نفـذلي</WatermarkArabic>
      <WatermarkLatin>nafezly.com</WatermarkLatin>
    </Watermark>
  </Shell>
);

export default App;
